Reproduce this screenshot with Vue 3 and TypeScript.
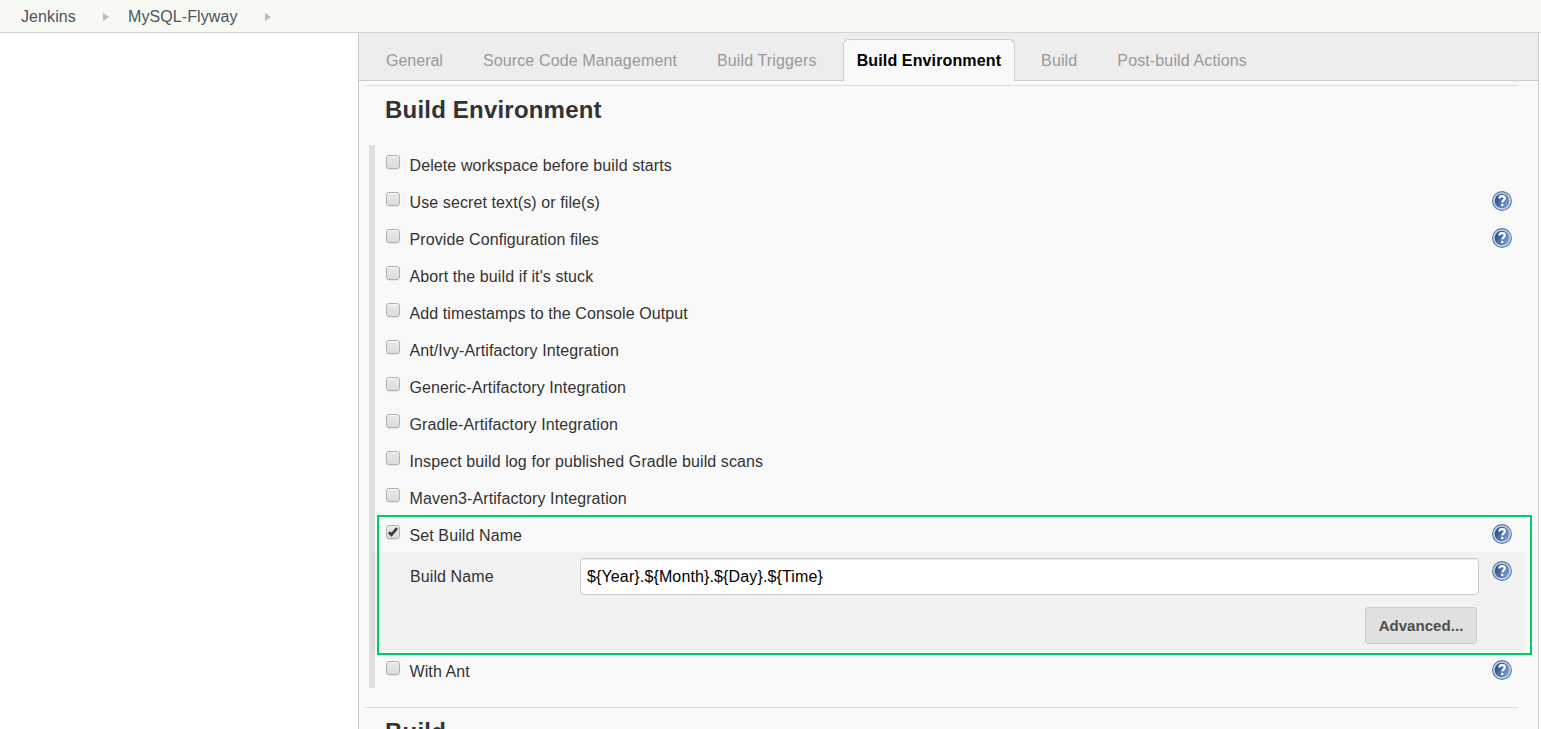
<script setup lang="ts">
import { defineComponent, h, ref } from 'vue'

interface Option {
  label: string
  checked: boolean
  help: boolean
}

const crumbs: string[] = ['Jenkins', 'MySQL-Flyway']

const tabs: string[] = [
  'General',
  'Source Code Management',
  'Build Triggers',
  'Build Environment',
  'Build',
  'Post-build Actions',
]
const activeTab = ref('Build Environment')

const option = (label: string, help = false, checked = false): Option => ({ label, help, checked })

const options = ref<Option[]>([
  option('Delete workspace before build starts'),
  option('Use secret text(s) or file(s)', true),
  option('Provide Configuration files', true),
  option("Abort the build if it's stuck"),
  option('Add timestamps to the Console Output'),
  option('Ant/Ivy-Artifactory Integration'),
  option('Generic-Artifactory Integration'),
  option('Gradle-Artifactory Integration'),
  option('Inspect build log for published Gradle build scans'),
  option('Maven3-Artifactory Integration'),
  option('Set Build Name', true, true),
  option('With Ant', true),
])

const buildName = ref('${Year}.${Month}.${Day}.${Time}')

const HelpIcon = defineComponent({
  setup() {
    return () =>
      h('svg', { width: 20, height: 20, viewBox: '0 0 20 20', role: 'img', 'aria-label': 'Help' }, [
        h('circle', { cx: 10, cy: 10, r: 9.4, fill: '#c9d5e6', stroke: '#567aac', 'stroke-width': 1.1 }),
        h('circle', { cx: 10, cy: 10, r: 7.3, fill: 'url(#help-disc)' }),
        h('path', {
          d: 'M7.3 7.5C7.4 5.8 8.5 5.1 10.1 5.1C11.8 5.1 12.8 5.9 12.8 7.2C12.8 9 10.4 9.2 10.3 11.4',
          fill: 'none',
          stroke: '#fff',
          'stroke-width': 2.2,
        }),
        h('rect', { x: 9.1, y: 12.7, width: 2.3, height: 2.2, rx: 0.4, fill: '#fff' }),
      ])
  },
})
</script>

<template>
  <div class="page">
    <svg class="defs" width="0" height="0" aria-hidden="true">
      <linearGradient id="help-disc" x1="0" y1="0.2" x2="1" y2="0.8">
        <stop offset="0.15" stop-color="#2c5391" />
        <stop offset="1" stop-color="#84a3cf" />
      </linearGradient>
    </svg>

    <nav class="crumbs">
      <template v-for="crumb in crumbs" :key="crumb">
        <a class="crumb">{{ crumb }}</a>
        <span class="arrow"></span>
      </template>
    </nav>

    <main class="panel">
      <div class="tabs">
        <div
          v-for="tab in tabs"
          :key="tab"
          class="tab"
          :class="{ active: tab === activeTab }"
          @click="activeTab = tab"
        >
          {{ tab }}
        </div>
      </div>

      <section class="section">
        <h2 class="title">Build Environment</h2>
        <div class="options">
          <div
            v-for="item in options"
            :key="item.label"
            class="option"
            :class="{ outlined: item.label === 'Set Build Name' }"
          >
            <div class="row">
              <label class="choice">
                <input v-model="item.checked" type="checkbox" class="native" />
                <span class="box">
                  <svg v-if="item.checked" width="12" height="12" viewBox="0 0 12 12">
                    <path d="M2 6.2L4.5 8.8L10 2.2" fill="none" stroke="#3a3a3a" stroke-width="2.7" />
                  </svg>
                </span>
                <span class="label">{{ item.label }}</span>
              </label>
              <HelpIcon v-if="item.help" class="help" />
            </div>
            <div v-if="item.label === 'Set Build Name' && item.checked" class="nested">
              <div class="field">
                <span class="field-label">Build Name</span>
                <input v-model="buildName" class="text" type="text" spellcheck="false" />
                <HelpIcon class="field-help" />
              </div>
              <div class="actions">
                <button class="advanced" type="button">Advanced...</button>
              </div>
            </div>
          </div>
        </div>
      </section>

      <section class="section">
        <h2 class="title">Build</h2>
      </section>
    </main>
  </div>
</template>

<style>
body {
  margin: 0;
  overflow: hidden;
}
</style>

<style scoped>
.page {
  height: 729px;
  overflow: hidden;
  display: flex;
  flex-direction: column;
  background: #fff;
  color: #333;
  font: 16px/20px 'Liberation Sans', Arial, sans-serif;
  letter-spacing: 0.1px;
}
.page * {
  box-sizing: border-box;
}
.defs {
  position: absolute;
}
.crumbs {
  flex: none;
  height: 33px;
  display: flex;
  align-items: center;
  padding: 1px 0 0 21px;
  border-bottom: 1px solid #d3d7cf;
  background: #f6faf2;
  box-sizing: border-box;
}
.crumb {
  color: #4d545d;
}
.arrow {
  border: solid transparent;
  border-width: 4.5px 0 4.5px 6px;
  border-left-color: #babdb6;
  margin: 0 19px 0 27px;
}
.panel {
  flex: 1;
  min-height: 0;
  margin: 0 2px 0 358px;
  border: solid #ccc;
  border-width: 0 1px;
  background: #f9f9f9;
  overflow: hidden;
}
.tabs {
  height: 48px;
  display: flex;
  align-items: flex-end;
  padding-left: 13px;
  background: #ededed;
  border-bottom: 1px solid #ccc;
  letter-spacing: 0.13px;
}
.tab {
  height: 42px;
  padding: 11px 13px 0;
  margin: 0 6px -1px 0;
  border: 1px solid transparent;
  border-bottom: 0;
  white-space: nowrap;
  color: #999;
}
.tab + .tab {
  margin-left: 6px;
}
.tab:first-child {
  letter-spacing: 0;
}
.tab.active {
  color: #000;
  font-weight: bold;
  background: #f9f9f9;
  border-color: #ccc;
  border-radius: 6px 6px 0 0;
}
.section {
  margin: 4px 20px 0 6px;
  border-top: 1px solid #ddd;
}
.section + .section {
  margin-top: 19px;
}
.title {
  margin: 0;
  padding: 9px 0 0 20px;
  height: 59px;
  font-size: 24px;
  line-height: 30px;
  letter-spacing: 0.2px;
}
.options {
  margin-left: 4px;
  margin-right: -14px;
  border-left: 6px solid #e0e0e0;
}
.option {
  position: relative;
}
.row {
  height: 37px;
  display: flex;
  justify-content: space-between;
  padding: 9px 20px 0 11px;
}
.choice {
  display: flex;
  gap: 9.5px;
}
.native {
  display: none;
}
.box {
  width: 14px;
  height: 14px;
  margin-top: 1px;
  border: 1px solid #b0b0b0;
  border-radius: 3px;
  background: linear-gradient(#e9e9e9, #dcdcdc);
  box-shadow: 0 1px 1px rgba(0, 0, 0, 0.08), inset 0 1px 1px rgba(255, 255, 255, 0.7);
}
.box svg {
  display: block;
}
.label {
  padding-top: 2px;
}
.help {
  flex: none;
}
.nested {
  height: 99px;
  margin: 0 7px 0 -3px;
  padding: 6px 13px 0 38px;
  background: rgba(0, 0, 0, 0.026);
}
.field {
  display: flex;
  align-items: flex-start;
}
.field-label {
  width: 170px;
  padding-top: 9px;
}
.text {
  flex: 1;
  height: 37px;
  margin-right: 13px;
  padding: 0 6px;
  border: 1px solid #ccc;
  border-radius: 4px;
  background: #fff;
  box-shadow: inset 0 1px 1px rgba(0, 0, 0, 0.075);
  color: #000;
  font: inherit;
  letter-spacing: 0.13px;
  outline: none;
}
.field-help {
  flex: none;
  margin-top: 3px;
}
.actions {
  display: flex;
  justify-content: flex-end;
  padding: 12px 35px 0 0;
}
.advanced {
  width: 112px;
  height: 37px;
  padding: 0;
  border: 1px solid #ccc;
  border-radius: 3px;
  background: #e0e0e0;
  color: #4d4d4d;
  font: bold 15px 'Liberation Sans', Arial, sans-serif;
  letter-spacing: 0.05px;
}
/* Highlight frame drawn over the option and its nested form */
.outlined::after {
  content: '';
  position: absolute;
  inset: 0 0 -4px 2px;
  border: 2px solid #0c6;
  pointer-events: none;
}
</style>
